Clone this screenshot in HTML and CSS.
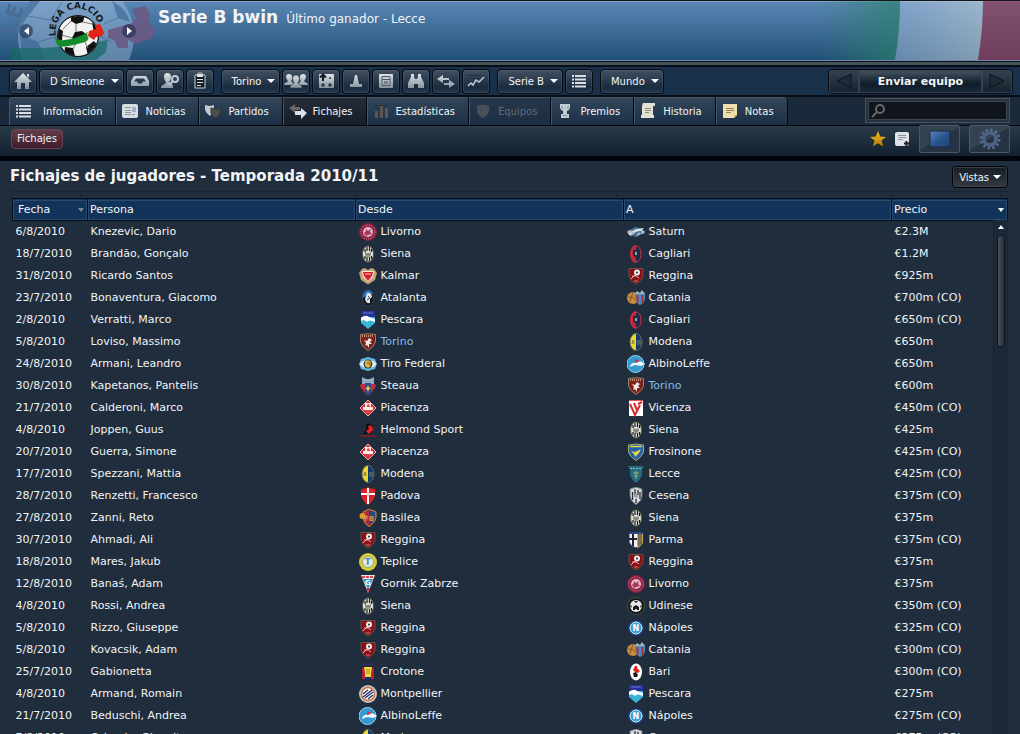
FILE: index.html
```html
<!DOCTYPE html>
<html lang="es">
<head>
    <meta charset="UTF-8">
    <meta name="viewport" content="width=device-width, initial-scale=1.0">
    <title>Serie B bwin - Fichajes</title>
    <link rel="stylesheet" href="styles.css">
</head>
<body>
    <!-- shared gradients -->
    <svg class="defs" aria-hidden="true">
        <defs>
            <linearGradient id="metal" gradientUnits="userSpaceOnUse" x1="0" y1="2" x2="0" y2="18">
                <stop offset="0" stop-color="#e4e8ec"/><stop offset="1" stop-color="#7f8d9a"/>
            </linearGradient>
            <linearGradient id="gold" x1="0" y1="0" x2="0" y2="1">
                <stop offset="0" stop-color="#f0c030"/><stop offset="1" stop-color="#b87803"/>
            </linearGradient>
            <linearGradient id="screen" x1="0" y1="0" x2="1" y2="1">
                <stop offset="0" stop-color="#5c86bb"/><stop offset=".5" stop-color="#2a5590"/><stop offset="1" stop-color="#1d4278"/>
            </linearGradient>
        </defs>
    </svg>

    <header class="banner">
        <svg class="banner-ghost" width="160" height="59" viewBox="0 1 160 59" aria-hidden="true">
            <defs><path id="ghostArc" d="M18 34Q18 16 28 0"/></defs>
            <circle cx="76" cy="36" r="58" fill="#a9c4e2" opacity=".45"/>
            <path d="M20 34L38 42L46 60H22ZM112 1Q126 8 130 22L118 18ZM18 30L28 16L40 1H30Q20 12 18 30Z" fill="#35608f" opacity=".6"/>
            <path d="M38 42L60 36M28 16L50 20L62 2M112 42L96 34M118 18L104 24" stroke="#35608f" opacity=".6" fill="none"/>
            <path d="M10 48Q60 50 108 40L106 52L96 60H12Z" fill="#196a68" opacity=".75"/>
            <path d="M108 30L132 23L136 18L132 9L146 6L150 14L148 22L156 30L152 38L136 44L128 40L128 48L118 48L114 40L108 38Z" fill="#6a5a84" opacity=".9"/>
            <text font-size="21" font-weight="bold" fill="#4a6c92"><textPath href="#ghostArc">LE</textPath></text>
        </svg>
        <svg class="banner-flag" width="200" height="59" viewBox="0 0 200 59" preserveAspectRatio="none" aria-hidden="true">
            <defs>
                <linearGradient id="flagGreen"><stop offset="0" stop-color="#2f8065" stop-opacity="0"/><stop offset="1" stop-color="#2c8069" stop-opacity=".7"/></linearGradient>
                <linearGradient id="flagWhite"><stop offset="0" stop-color="#a9bfe0" stop-opacity=".5"/><stop offset="1" stop-color="#cbd6dc" stop-opacity=".58"/></linearGradient>
            </defs>
            <path d="M0 0H80Q80 30 75 59H0Z" fill="url(#flagGreen)"/>
            <path d="M80 0H163Q163 30 158 59H75Q80 30 80 0Z" fill="url(#flagWhite)"/>
            <path d="M163 0H200V59H158Q163 30 163 0Z" fill="#963650" opacity=".68"/>
        </svg>
        <button class="round-btn" type="button" aria-label="Anterior"><svg width="5" height="8" viewBox="0 0 5 8"><path d="M5 0V8L0 4Z" fill="#fff"/></svg></button>
        <svg class="league-logo" width="76" height="58" viewBox="0 0 76 58" role="img" aria-label="Lega Calcio">
            <defs>
                <path id="logoArc" d="M18 34A22 23 0 0 1 60 21"/>
                <clipPath id="ballClip"><circle cx="40" cy="34" r="20"/></clipPath>
            </defs>
            <circle cx="40" cy="34" r="21" fill="#111"/>
            <g clip-path="url(#ballClip)">
                <circle cx="40" cy="34" r="20" fill="#f1f1f1"/>
                <path d="M33 12L47 12L45 20L38 22L33 19ZM37 30L44 29L49 33L47 40L38 41L34 36ZM19 25L25 29L24 38L18 40ZM54 20L61 26L60 35L56 31ZM27 45L35 46L37 54L26 55ZM48 45L56 39L60 44L50 54Z" fill="#111"/>
                <path d="M38 22V30M49 33L56 31M34 36L24 33M38 41L35 47M47 40L50 46M45 20L54 22M33 19L25 27" stroke="#777" fill="none"/>
            </g>
            <path d="M17 35Q20 39 26 38Q38 37 50 30L52 34L49 39Q36 44 22 45Q17 42 17 35Z" fill="#138a2c"/>
            <path d="M49 31L53 29L53 35L50 36Z" fill="#eee"/>
            <path d="M51 29L58 27L57 23L62 22L64 26L66 31L64 34L58 35L56 38L50 34Z" fill="#e32218"/>
            <text font-size="9" font-weight="bold" fill="#15191f"><textPath href="#logoArc">LEGA CALCIO</textPath></text>
        </svg>
        <button class="round-btn" type="button" aria-label="Siguiente"><svg width="5" height="8" viewBox="0 0 5 8"><path d="M0 0V8L5 4Z" fill="#fff"/></svg></button>
        <h1>Serie B bwin</h1>
        <p class="subtitle">Último ganador - Lecce</p>
    </header>

    <nav class="toolbar" aria-label="Principal">
        <div class="group">
            <button class="tool" type="button" aria-label="Inicio"><svg viewBox="0 0 20 20"><path d="M10 2L19 11H16V18H12V12H8V18H4V11H1ZM14 3H16V7L14 5Z" fill="url(#metal)"/></svg></button>
            <button class="tool menu" type="button">D Simeone<span class="caret"></span></button>
            <button class="tool" type="button" aria-label="Bandeja"><svg viewBox="0 0 20 20"><path d="M4 5H16L19 10V15H1V10ZM6 7.500L4 10.500H7L8 12.500H12L13 10.500H16L14 7.500Z" fill="url(#metal)" fill-rule="evenodd"/></svg></button>
            <button class="tool" type="button" aria-label="Ojeador"><svg viewBox="0 0 20 20"><path d="M7 2Q11 2 11 6Q11 9 9 11L13 14V17H1Q1 14 5 13L6 11Q4 9 4 6Q4 2 7 2Z" fill="url(#metal)"/><circle cx="15" cy="8" r="3" fill="none" stroke="#c0c8d0" stroke-width="2"/><path d="M13 10L9 14" stroke="#c0c8d0" stroke-width="2"/></svg></button>
            <button class="tool" type="button" aria-label="Tareas"><svg viewBox="0 0 20 20"><path d="M5 4H8V2H12V4H15V17H5Z" fill="#151c24" stroke="#c9d0d6" stroke-width="1"/><path d="M7 3H13V6H7Z" fill="#dde2e6"/><path d="M7 8.500H13M7 11.500H13M7 14.500H11" stroke="#dde2e6"/></svg></button>
        </div>
        <div class="group">
            <button class="tool menu" type="button">Torino<span class="caret"></span></button>
            <button class="tool" type="button" aria-label="Plantilla"><svg class="wide" viewBox="0 0 24 20"><path d="M5 3Q8 3 8 6Q8 9 7 10L9 12V14H0Q0 12 3 11L4 10Q2 8 2 6Q2 3 5 3ZM19 3Q22 3 22 6Q22 8 20 10L21 11Q24 12 24 14H15V12L17 10Q16 9 16 6Q16 3 19 3Z" fill="url(#metal)"/><path d="M12 4Q15.500 4 15.500 8Q15.500 10 14 12L15 13Q18 14 18 17H6Q6 14 9 13L10 12Q8.500 10 8.500 8Q8.500 4 12 4Z" fill="url(#metal)" stroke="#29394a" stroke-width=".6"/></svg></button>
            <button class="tool" type="button" aria-label="Tácticas"><svg viewBox="0 0 20 20"><rect x="3" y="3" width="15" height="14" rx="1" fill="url(#metal)"/><path d="M7 3V10M4 6.500L7 3.500L10 6.500" stroke="#111820" stroke-width="2" fill="none"/><circle cx="14" cy="7" r="1" fill="#253545"/><circle cx="7" cy="14" r="1.700" fill="#253545"/><circle cx="14" cy="14" r="1.700" fill="#253545"/></svg></button>
            <button class="tool" type="button" aria-label="Entrenamiento"><svg viewBox="0 0 20 20"><path d="M9 4H11L13 13H16V16H4V13H7Z" fill="url(#metal)"/></svg></button>
            <button class="tool" type="button" aria-label="Calendario"><svg viewBox="0 0 20 20"><rect x="3" y="3" width="14" height="14" rx="1" fill="url(#metal)"/><path d="M6 5.500H14V14.500H6ZM6 8.500H14" fill="none" stroke="#4a5864"/><rect x="8" y="10" width="4" height="3" fill="#75838f"/></svg></button>
            <button class="tool" type="button" aria-label="Ojear"><svg viewBox="0 0 20 20"><path d="M5 3H8V6L9 8H11L12 6V3H15V6L18 12V17H12V13H8V17H2V12L5 6Z" fill="url(#metal)"/></svg></button>
            <button class="tool" type="button" aria-label="Traspasos"><svg viewBox="0 0 20 20"><path d="M1 8L7 4V7H13V9H7V12ZM19 13L13 9V12H8V14H13V17Z" fill="url(#metal)"/></svg></button>
            <button class="tool" type="button" aria-label="Finanzas"><svg viewBox="0 0 20 20"><path d="M2 4.500H18M2 7.500H18M2 10.500H18" stroke="#223243"/><path d="M2 15L5 12L7 14L10 9L13 11L18 6" fill="none" stroke="#c0c8cf" stroke-width="1.500"/></svg></button>
        </div>
        <div class="group">
            <button class="tool menu" type="button">Serie B<span class="caret"></span></button>
            <button class="tool" type="button" aria-label="Lista"><svg viewBox="0 0 20 20"><path d="M3 5H5M6 5H17M3 8.500H5M6 8.500H17M3 12H5M6 12H17M3 15.500H5M6 15.500H17" stroke="#d9dee2" stroke-width="2"/></svg></button>
        </div>
        <div class="group">
            <button class="tool menu" type="button">Mundo<span class="caret"></span></button>
        </div>
        <div class="continue">
            <button type="button" aria-label="Atrás"><svg width="16" height="16" viewBox="0 0 16 16"><path d="M15 1V15L1 8Z" fill="#1e2a35" stroke="#0c141c"/></svg></button>
            <button class="send" type="button">Enviar equipo</button>
            <button type="button" aria-label="Adelante"><svg width="16" height="16" viewBox="0 0 16 16"><path d="M1 1V15L15 8Z" fill="#1e2a35" stroke="#0c141c"/></svg></button>
        </div>
    </nav>

    <nav class="tabs" aria-label="Secciones">
        <a class="tab first" href="#"><svg viewBox="0 0 16 16"><path d="M1 3H3M4 3H16M1 6.500H3M4 6.500H16M1 10H3M4 10H16M1 13.500H3M4 13.500H16" stroke="#d9dee2" stroke-width="2"/></svg>Información</a>
        <a class="tab" href="#"><svg viewBox="0 0 16 16"><rect x="0" y="1" width="16" height="14" rx="2" fill="#d8dde0"/><path d="M3 4.500H9M3 7.500H9M3 9.500H9M3 11.500H9M10 11.500H13" stroke="#8b979f"/><rect x="10" y="4" width="4" height="5" fill="#9db2c4"/></svg>Noticias</a>
        <a class="tab" href="#"><svg viewBox="0 0 16 16"><path d="M0 2L5 3L9 2V8L5 13Q1 10 0 7Z" fill="#c3c9cd"/><path d="M6 5L10.500 6L15 5V10Q14 13 10.500 15Q7 13 6 10Z" fill="#4f4e4d" stroke="#3a3a3b"/></svg>Partidos</a>
        <a class="tab active" href="#"><svg class="big" viewBox="0 0 18 16"><path d="M0 5L6 1V4H11V7H6V10Z" fill="#6b6663"/><path d="M18 10L12 5V8H6V12H12V16Z" fill="#dce1e5"/></svg>Fichajes</a>
        <a class="tab" href="#"><svg viewBox="0 0 16 16"><path d="M1 2.500H15M1 5.500H15" stroke="#25323f"/><path d="M2 8H5V15H2ZM7 3H10V15H7ZM12 5H15V15H12Z" fill="#5b5655"/></svg>Estadísticas</a>
        <a class="tab disabled" href="#"><svg viewBox="0 0 16 16"><path d="M2 3Q8 0 14 3V8Q13 13 8 15Q3 13 2 8Z" fill="#484f56"/></svg>Equipos</a>
        <a class="tab" href="#"><svg viewBox="0 0 16 16"><path d="M3 1H13V5Q12 8 10 8V11H12V15H4V11H6V8Q4 8 3 5Z" fill="#c2cbd2"/><path d="M5 3V6M11 3V6M6 12.500H10" stroke="#7c8992"/></svg>Premios</a>
        <a class="tab" href="#"><svg viewBox="0 0 16 16"><path d="M3 0H15V3H13V12H14V15H1V12H2V3Z" fill="#e2dfd3"/><path d="M5 5.500H11M5 7.500H11M5 9.500H9" stroke="#8c8a82"/></svg>Historia</a>
        <a class="tab" href="#"><svg viewBox="0 0 16 16"><path d="M1 1H15V12L12 15H1Z" fill="#f0dfaa"/><path d="M4 5.500H12M4 7.500H12M4 9.500H9" stroke="#8e8463"/><path d="M15 12L12 15V12Z" fill="#c9b57a"/></svg>Notas</a>
        <form class="search">
            <svg width="14" height="14" viewBox="0 0 14 14" aria-hidden="true"><circle cx="9" cy="5" r="4" fill="none" stroke="#66696d" stroke-width="2"/><path d="M6 8L1 13" stroke="#66696d" stroke-width="2"/></svg>
            <input type="search" aria-label="Buscar">
        </form>
    </nav>

    <div class="subbar">
        <a class="pill" href="#">Fichajes</a>
        <div class="actions">
            <button class="plain" type="button" aria-label="Favorito"><svg width="18" height="18" viewBox="0 0 18 18"><path d="M9 1L11.200 6.600L17 7L12.500 10.600L14.200 16.500L9 13.200L3.800 16.500L5.500 10.600L1 7L6.800 6.600Z" fill="url(#gold)"/></svg></button>
            <button class="plain" type="button" aria-label="Añadir nota"><svg width="16" height="16" viewBox="0 0 16 16"><rect x="1" y="1" width="14" height="14" rx="2" fill="#dfe3e7"/><path d="M4 4.500H12M4 6.500H12M4 8.500H9" stroke="#8d949b"/><path d="M12.500 10V15.500M10 12.500H15.500" stroke="#20262c" stroke-width="2"/></svg></button>
            <button class="square" type="button" aria-label="Pantalla"><svg width="22" height="18" viewBox="0 0 22 18"><rect x="1" y="1" width="20" height="16" fill="url(#screen)" stroke="#1a2d48"/></svg></button>
            <button class="square" type="button" aria-label="Opciones"><svg width="22" height="22" viewBox="0 0 22 22"><circle cx="11" cy="11" r="9" fill="none" stroke="#566c8c" stroke-width="3" stroke-dasharray="2.356 2.356"/><circle cx="11" cy="11" r="6" fill="none" stroke="#4b6283" stroke-width="4"/><circle cx="11" cy="11" r="4" fill="none" stroke="#2f415c"/></svg></button>
        </div>
    </div>

    <main>
        <div class="heading">
            <h2>Fichajes de jugadores - Temporada 2010/11</h2>
            <button class="views" type="button">Vistas<span class="caret"></span></button>
        </div>
        <div class="list">
            <table>
                <colgroup><col class="col-date"><col><col><col><col class="col-price"></colgroup>
                <thead>
                    <tr>
                        <th scope="col"><div class="head">Fecha<span class="sort dim"></span></div></th>
                        <th scope="col"><div class="head">Persona</div></th>
                        <th scope="col"><div class="head">Desde</div></th>
                        <th scope="col"><div class="head">A</div></th>
                        <th scope="col"><div class="head">Precio<span class="sort"></span></div></th>
                    </tr>
                </thead>
                <tbody id="transfers"></tbody>
            </table>
            <div class="scrollbar" aria-hidden="true"><span class="up"></span><span class="thumb"></span></div>
        </div>
    </main>

    <script src="script.js"></script>
</body>
</html>
```
FILE: styles.css
```css
* {
    box-sizing: border-box;
}

body {
    margin: 0;
    height: 100vh;
    display: flex;
    flex-direction: column;
    overflow: hidden;
    background-color: #1f2d3d;
    color: #f2f4f6;
    font-family: "DejaVu Sans", Verdana, sans-serif;
    font-size: 11px;
}

button {
    font-family: inherit;
    color: inherit;
    padding: 0;
    cursor: pointer;
}

a {
    color: inherit;
    text-decoration: none;
}

svg {
    display: block;
    flex: none;
}

.defs {
    position: absolute;
    width: 0;
    height: 0;
}

/* banner */
.banner {
    position: relative;
    flex: none;
    display: flex;
    align-items: center;
    height: 61px;
    padding-left: 19px;
    border-top: 1px solid #10151c;
    border-bottom: 1px solid #6c87a3;
    background: linear-gradient(#5a88b6, #215078);
    box-shadow: inset 0 1px #8ba2c0;
    overflow: hidden;
}

.banner > * {
    position: relative;
}

.banner .banner-ghost {
    position: absolute;
    left: 0;
    top: 0;
}

.banner .banner-flag {
    position: absolute;
    right: 0;
    top: 0;
}

.round-btn {
    width: 14px;
    height: 14px;
    display: flex;
    align-items: center;
    justify-content: center;
    border: none;
    border-radius: 50%;
    background-color: rgba(25, 45, 75, 0.6);
}

.league-logo {
    margin: 0 8px 0 5px;
}

.banner h1 {
    margin: 0;
    padding: 0 8px 27px 22px;
    font-size: 17px;
    line-height: 20px;
}

.subtitle {
    margin: 0;
    padding-bottom: 24px;
    font-size: 12px;
    line-height: 16px;
}

/* toolbar */
.toolbar {
    flex: none;
    display: flex;
    align-items: center;
    height: 36px;
    padding: 5px 7px 0 9px;
    border-top: 1px solid #0c1118;
    border-bottom: 2px solid #080d14;
    background: linear-gradient(#45545a 0, #45545a 3px, #0a0f15 3px, #0a0f15 5px, #19304a 5px);
}

.group {
    display: flex;
    gap: 2px;
    margin-right: 7px;
}

.tool {
    display: flex;
    align-items: center;
    justify-content: center;
    width: 28px;
    height: 25px;
    border: 1px solid #070b11;
    border-radius: 4px;
    background: linear-gradient(#425061, #1b2c3f 75%, #24384d);
    box-shadow: inset 0 0 0 1px rgba(110, 130, 150, 0.25);
    font-size: 10px;
}

.tool svg {
    width: 20px;
    height: 20px;
}

.tool .wide {
    width: 24px;
}

.menu {
    width: auto;
    gap: 6px;
    padding: 0 4px 0 10px;
}

.caret {
    border: 4px solid transparent;
    border-top-color: #fff;
    border-bottom: none;
}

.continue {
    display: flex;
    margin-left: auto;
    height: 25px;
    border: 1px solid #070b11;
    border-radius: 4px;
    overflow: hidden;
}

.continue button {
    display: flex;
    align-items: center;
    justify-content: center;
    width: 30px;
    border: 1px solid #35434f;
    background: linear-gradient(#34424f, #14212e);
}

.continue .send {
    width: 123px;
    background: linear-gradient(#44525f, #101d2a 60%, #16283a);
    font-size: 11px;
    font-weight: bold;
}

/* tabs */
.tabs {
    flex: none;
    display: flex;
    height: 29px;
    padding: 0 10px 0 9px;
    border-bottom: 1px solid #05080c;
    background-color: #1b2a3a;
}

.tab {
    display: flex;
    align-items: center;
    gap: 7px;
    padding: 0 13px 0 6px;
    border-right: 1px solid #05080c;
    background: linear-gradient(#33465a, #1b3047);
    box-shadow: inset 1px 1px #43566a;
    font-size: 10px;
    white-space: nowrap;
}

.tab svg {
    width: 16px;
    height: 16px;
}

.tab .big {
    width: 18px;
    margin-right: -1px;
}

.tab.first {
    gap: 12px;
    border-top-left-radius: 4px;
}

.tab:last-of-type {
    border-top-right-radius: 4px;
}

.tab.active {
    background: linear-gradient(#242d38, #151e29);
}

.tab.disabled {
    color: #5f6a75;
    background: linear-gradient(#26384b, #1b2e43);
}

.search {
    display: flex;
    align-items: center;
    width: 145px;
    height: 25px;
    margin: 1px 0 0 auto;
    padding: 0 3px;
    border: 3px solid #27323d;
    outline: 1px solid #46525d;
    outline-offset: -1px;
    background-color: #0f141d;
    box-shadow: inset 0 0 0 1px #3b464f;
}

.search input {
    flex: 1;
    min-width: 0;
    border: none;
    outline: none;
    background: none;
    color: #fff;
    font-family: inherit;
    font-size: 11px;
}

/* sub bar */
.subbar {
    flex: none;
    display: flex;
    align-items: center;
    height: 35px;
    padding: 0 10px 6px 11px;
    border-bottom: 4px solid #02050a;
    background: linear-gradient(#2b3a49, #12212f 30px, #02050a 30px);
}

.pill {
    height: 20px;
    padding: 0 5px;
    border: 1px solid #6d4351;
    border-radius: 4px;
    background: linear-gradient(#623d4c, #421c2a);
    font-size: 10px;
    line-height: 18px;
}

.actions {
    display: flex;
    align-items: center;
    gap: 9px;
    margin-left: auto;
}

.plain {
    border: none;
    background: none;
}

.plain + .plain {
    margin-left: -2px;
}

.square {
    display: flex;
    align-items: center;
    justify-content: center;
    width: 41px;
    height: 28px;
    border: 1px solid #4c5965;
    border-radius: 2px;
    background: linear-gradient(150deg, #354351 48%, #253342 50%);
}

/* transfers */
main {
    flex: 1;
    min-height: 0;
    display: flex;
    flex-direction: column;
    padding: 0 12px;
}

.heading {
    flex: none;
    display: flex;
    align-items: center;
    justify-content: space-between;
    height: 31px;
    margin: 0 0 6px -2px;
    border-bottom: 1px solid #1a2531;
}

.heading h2 {
    margin: 0;
    font-size: 15px;
    line-height: 20px;
}

.views {
    display: flex;
    align-items: center;
    gap: 4px;
    height: 22px;
    margin-top: 2px;
    padding: 0 6px;
    border: 1px solid #000;
    border-radius: 4px;
    background: linear-gradient(#161d25, #333a42);
    box-shadow: inset 0 0 0 1px #39414a;
    font-size: 10px;
}

.list {
    position: relative;
    flex: 1;
    min-height: 0;
    overflow: hidden;
}

table {
    width: 100%;
    table-layout: fixed;
    border-collapse: collapse;
}

.col-date {
    width: 75px;
}

.col-price {
    width: 116px;
}

th,
td {
    height: 22px;
    padding: 0 3px;
    text-align: left;
    font-weight: normal;
    line-height: 16px;
    white-space: nowrap;
}

th {
    padding: 0;
    border: 1px solid #070d14;
    background-color: #12345a;
}

.head {
    display: flex;
    align-items: center;
    justify-content: space-between;
    height: 20px;
    padding: 0 3px 0 2px;
    box-shadow: inset 0 0 0 1px #2c4b6c;
}

th:first-child .head {
    padding-left: 5px;
}

.sort {
    border: 3px solid transparent;
    border-top: 4px solid #fff;
    border-bottom: none;
}

.sort.dim {
    border-top-color: #7388a0;
}

.club {
    display: flex;
    align-items: center;
    gap: 4px;
}

.club svg {
    width: 18px;
    height: 18px;
}

.club .own {
    color: #85bdec;
}

.scrollbar {
    position: absolute;
    top: 22px;
    right: 0;
    bottom: 0;
    width: 15px;
    display: flex;
    flex-direction: column;
    align-items: center;
    gap: 6px;
    padding-top: 5px;
    border-left: 1px solid #15202c;
    background-color: #1b2836;
}

.up {
    border: 3px solid transparent;
    border-top: none;
    border-bottom: 4px solid #fff;
}

.thumb {
    width: 8px;
    height: 112px;
    border: 1px solid #0e141c;
    border-radius: 3px;
    background: linear-gradient(90deg, #474d59, #2b303c);
}
```
FILE: script.js
```js
const SHIELD = 'M2 1.500H16V9Q15 14 9 17Q3 14 2 9Z';

// club crests, drawn in an 18x18 box
const crests = {
    'Livorno': '<circle cx="9" cy="9" r="9" fill="#8e1e42"/><circle cx="9" cy="9" r="7" fill="none" stroke="#c58799" stroke-dasharray="1 1"/><circle cx="9" cy="9" r="5" fill="#dfbcc6"/><path d="M5 10L7 8V6L9 8L12 6L11 9L13 11L9 12L7 13Z" fill="#a8385a"/>',
    'Siena': '<ellipse cx="9" cy="9" rx="5.500" ry="8" fill="#e4e4de" stroke="#5d5a3c"/><path d="M6 4V7M6 11V14M8 2V6M10.500 2V6M8 12V16M10.500 12V16M12.500 4V7M12.500 11V14" stroke="#16181b" stroke-width="1.200"/><path d="M6 7L9 8L12 7V10L10 12H8L6 10Z" fill="#8b8a84"/>',
    'Kalmar': '<path d="M0 6L3 2L6 1L9 3L12 1L15 2L18 6L16 13L9 17.500L2 13Z" fill="#c5a273"/><path d="M3 4H15L14 10L9 15L4 10Z" fill="#f4e9e0"/><path d="M4 5H14L13 9L9 14L5 9Z" fill="#d4202a"/><path d="M6 7H12" stroke="#f3c3c0"/>',
    'Atalanta': '<ellipse cx="9" cy="9" rx="5.500" ry="8" fill="#101217" stroke="#39424e"/><path d="M9 1Q3.500 2 3.500 9L8 7L14 5Q12 1 9 1Z" fill="#2273bd"/><path d="M8 4Q12 3 13 8L11 10V14Q7 15 6 10Z" fill="#dde6ee"/><path d="M9 7L11 9L8 11" stroke="#39424c" fill="none"/>',
    'Pescara': '<path d="M2 0H16V12L9 18L2 12Z" fill="#37b6d8"/><path d="M2 0H16V6H2Z" fill="#25309a"/><path d="M2 7Q7 3 10 6L16 8V11Q10 8 8 11L5 9L2 10Z" fill="#fff"/><path d="M4 2H14" stroke="#6c7ccc"/>',
    'Torino': '<path d="M1.500 1.500Q9 0 16.500 1.500V9Q15 14 9 17.500Q3 14 1.500 9Z" fill="#7c2019" stroke="#b89470" stroke-width=".8"/><path d="M3 3H15" stroke="#d1b6a0" stroke-width="1.500" stroke-dasharray="1 1"/><path d="M5 7L8 8L10 5L13 7L11 9L13 11L10 11L10 15L8 12L6 13L7 10Z" fill="#f0e8e2"/>',
    'Tiro Federal': '<path d="M2 4L9 2L16 4L18 9L16 14L9 16L2 14L0 9Z" fill="#65b3df"/><ellipse cx="9" cy="9" rx="8" ry="4" fill="#edf0e9"/><circle cx="9" cy="9" r="4.500" fill="#29415c"/><path d="M6 6L9 5L12 7L12 11L9 13L6 11Z" fill="#e2b53a"/><path d="M8 8H11V11" stroke="#7b4c1d" fill="none"/>',
    'Steaua': '<path d="M3 4L3 0L7 2H11L15 0L15 4L15 7H3Z" fill="#92adc2"/><path d="M2 7L1 9L3 12Q5 16 9 18Q13 16 15 12L17 9L16 7Z" fill="#c82a39"/><path d="M6 6H12V16L9 18L6 16Z" fill="#274a91"/><path d="M9 8L10 10.500L12 11L10 12.500L9 15L8 12.500L6 11L8 10.500Z" fill="#eccb43"/>',
    'Piacenza': '<path d="M9 1L17 9L9 17L1 9Z" fill="#d9252b" stroke="#efb1ad"/><path d="M6 4H12V8H14V11H4V8H6Z" fill="#fbeceb"/><path d="M8 6L10 5L11 8H8ZM5 11H13L9 15Z" fill="#dd4648"/>',
    'Helmond Sport': '<path d="M4 13L7 8V4L10 2L14 5L13 11L11 13Z" fill="#101115"/><path d="M9 5Q14 3 14 9L10 13L7 10L10 8Z" fill="#ed1e27"/><path d="M1 15H17" stroke="#8d1b23" stroke-width="1.500"/>',
    'Modena': '<ellipse cx="9" cy="9" rx="6" ry="8.500" fill="#14396f"/><path d="M9 .500A6 8.500 0 0 0 9 17.500Z" fill="#efd62d"/><ellipse cx="9" cy="9" rx="6" ry="8.500" fill="none" stroke="#626f54"/><path d="M5 11L6 7L7 11M11 7V12M13 7V12" stroke="#7e8148" fill="none"/>',
    'Padova': '<path d="M2 2Q6 2 9 0Q12 2 16 2V8Q15 14 9 18Q3 14 2 8Z" fill="#dd2028"/><path d="M9 1V17M2 7H16" stroke="#fff" stroke-width="2"/><path d="M9 5V10" stroke="#e8a29c"/>',
    'Basilea': '<path d="M4 3L10 0L17 3V8Q16 14 10 17.500Q5 15 4 9Z" fill="#b72737" stroke="#bb9143"/><path d="M10 1L16 3.500V8Q15 13 10 16Z" fill="#254889"/><circle cx="3.500" cy="7" r="3" fill="#dc9d2a"/><text x="5" y="12" font-size="7" font-weight="bold" fill="#c99c48">FB</text>',
    'Reggina': `<path d="${SHIELD}" fill="#8f0d17" stroke="#675247"/><circle cx="10" cy="5.500" r="3" fill="#eee"/><circle cx="10" cy="5.500" r="1" fill="#222"/><path d="M4 12L8 8L12 11M5 9L9 9" stroke="#e1b6b4" fill="none"/><path d="M7 14H11" stroke="#cc7f7d"/>`,
    'Teplice': '<circle cx="9" cy="9" r="9" fill="#d4cd35"/><circle cx="9" cy="9" r="5.500" fill="#e2e8ec" stroke="#9aa873"/><text x="6" y="12" font-size="8" font-weight="bold" fill="#5682aa">T</text>',
    'Gornik Zabrze': '<path d="M2 0H16L9 18Z" fill="#dee8ee"/><path d="M3 2H15" stroke="#d64a54" stroke-width="2" stroke-dasharray="3 1"/><path d="M4 4H14L9 14Z" fill="#2e93bd"/><path d="M7 13L9 18L11 13Z" fill="#cc3340"/><text x="6" y="10" font-size="7" font-weight="bold" fill="#fff">G</text>',
    'Crotone': '<path d="M4 4H14V17H4Z" fill="#23296a"/><path d="M3 1.500H15" stroke="#422b6a" stroke-width="2" stroke-dasharray="2 1"/><path d="M3 5H6V16H3ZM12 5H15V16H12Z" fill="#bc2139"/><path d="M5 4H13L12 10L12 14H6L6 10Z" fill="#efdb38"/><path d="M8 6V11M10 6V11" stroke="#a5912e"/>',
    'Montpellier': '<circle cx="9" cy="9" r="9" fill="#c2c7cb"/><circle cx="9" cy="9" r="6.500" fill="#fff" stroke="#d87443" stroke-width="1.500"/><path d="M4 9L9 5M4 12L13 5M6 13L14 7M9 14L14 10" stroke="#25386d" stroke-width="1.500"/>',
    'AlbinoLeffe': '<circle cx="8.500" cy="9" r="8.500" fill="#329bd0" stroke="#9ed1e8"/><path d="M3 12Q4 7 9 8L13 6L18 9L14 11L8 10Z" fill="#eef8fc"/><path d="M8 4L13 6L8 8Z" fill="#dd3149"/>',
    'Saturn': '<ellipse cx="9" cy="9" rx="9" ry="3" fill="#a5b4c0"/><circle cx="9" cy="9" r="5" fill="#416b90"/><path d="M1 11Q7 5 17 5L14 8Q8 8 4 13Z" fill="#dbe3e7"/><path d="M4 11L8 9M10 12L13 10" stroke="#b2bdc8" stroke-width="2"/>',
    'Cagliari': '<ellipse cx="9" cy="9" rx="6" ry="9" fill="#c42638"/><path d="M9 0A6 9 0 0 1 9 18Z" fill="#1b2744"/><ellipse cx="9" cy="9" rx="5" ry="8" fill="none" stroke="#c9334b"/><path d="M6 5H12V10L9 13L6 10Z" fill="#202c49"/><path d="M8 7H10V10H8Z" fill="#9aa1ae"/>',
    'Catania': '<circle cx="6" cy="9" r="6" fill="#c98c3c"/><path d="M1 8Q6 7 10 12M3 13L6 3" stroke="#8c5823" fill="none"/><path d="M8 4H18V10Q17 14 13 16Q9 14 8 10Z" fill="#3f91c5"/><path d="M10.500 6V14M15.500 6V14" stroke="#b53035" stroke-width="2"/><path d="M8 5L10 2L13 4L15 1L18 5Z" fill="#a7b3bd"/>',
    'Vicenza': '<rect x="2" y="1" width="14" height="16" fill="#fff"/><path d="M3 5L8 16L13 6M7 4L10 11M11 5L15 3" fill="none" stroke="#d52b31" stroke-width="2"/><path d="M2 1.500H16" stroke="#e3534f"/>',
    'Frosinone': '<path d="M1.500 2Q9 0 16.500 2V9Q15 14 9 17.500Q3 14 1.500 9Z" fill="#2460ad" stroke="#a9ad68"/><path d="M3 3.500H15" stroke="#e5d54c" stroke-width="1.500"/><path d="M4 8L8 9L14 6L12 10L8 14L7 11Z" fill="#e6d84e"/>',
    'Lecce': '<path d="M1 1H17L15 5V10Q14 14 9 18Q4 14 3 10V5Z" fill="#236c82"/><path d="M3 3.500H15" stroke="#95b8bd" stroke-dasharray="2 1"/><path d="M9 6V14M6 8H12M7 11H11" stroke="#a8b26a"/>',
    'Cesena': '<path d="M3 2L9 0L15 2V9Q15 14 9 17.500Q3 14 3 9Z" fill="#d7dadb" stroke="#70777d"/><path d="M5.500 5V13M8 2V8M11 3V8M13 5V12M9 12V16" stroke="#292e33" stroke-width="1.300"/><circle cx="9" cy="9" r="2" fill="#9ba1a4"/>',
    'Parma': '<path d="M2 1.500H16V11Q15 15 9 17Q3 15 2 11Z" fill="#f3f2ea" stroke="#273564"/><path d="M10 2H16V11Q15 15 10 17Z" fill="#d1a64b"/><path d="M12 3V15M14 3V14" stroke="#273564"/><path d="M6 3V15M2 8H10" stroke="#172036" stroke-width="2"/><path d="M2 2H16" stroke="#31438a" stroke-width="2"/>',
    'Udinese': '<circle cx="9" cy="9" r="8.500" fill="#181b1d" stroke="#6b6951" stroke-dasharray="1.500 1"/><circle cx="9" cy="9" r="6" fill="#e8e8e4"/><path d="M6 10L9 8L12 10V13H10V12H8V13H6ZM7 4H11L9 6ZM3 8L5 9L4 11ZM15 8L13 9L14 11Z" fill="#15181a"/>',
    'Nápoles': '<circle cx="9" cy="9" r="8" fill="#163e74"/><circle cx="9" cy="9" r="6" fill="#3f9fd4" stroke="#e2eff5"/><text x="5.500" y="12" font-size="8" font-weight="bold" fill="#fff">N</text>',
    'Bari': '<ellipse cx="9" cy="9" rx="6" ry="8.500" fill="#fff"/><path d="M8 3Q11 2 10 5L13 8L11 10L8 9L6 7Z" fill="#dc2521"/><path d="M6 10L9 9L11 12L10 14H7Z" fill="#17191b"/>'
};

const transfers = [
    ['6/8/2010', 'Knezevic, Dario', 'Livorno', 'Saturn', '€2.3M'],
    ['18/7/2010', 'Brandão, Gonçalo', 'Siena', 'Cagliari', '€1.2M'],
    ['31/8/2010', 'Ricardo Santos', 'Kalmar', 'Reggina', '€925m'],
    ['23/7/2010', 'Bonaventura, Giacomo', 'Atalanta', 'Catania', '€700m (CO)'],
    ['2/8/2010', 'Verratti, Marco', 'Pescara', 'Cagliari', '€650m (CO)'],
    ['5/8/2010', 'Loviso, Massimo', 'Torino', 'Modena', '€650m'],
    ['24/8/2010', 'Armani, Leandro', 'Tiro Federal', 'AlbinoLeffe', '€650m'],
    ['30/8/2010', 'Kapetanos, Pantelis', 'Steaua', 'Torino', '€600m'],
    ['21/7/2010', 'Calderoni, Marco', 'Piacenza', 'Vicenza', '€450m (CO)'],
    ['4/8/2010', 'Joppen, Guus', 'Helmond Sport', 'Siena', '€425m'],
    ['20/7/2010', 'Guerra, Simone', 'Piacenza', 'Frosinone', '€425m (CO)'],
    ['17/7/2010', 'Spezzani, Mattia', 'Modena', 'Lecce', '€425m (CO)'],
    ['28/7/2010', 'Renzetti, Francesco', 'Padova', 'Cesena', '€375m (CO)'],
    ['27/8/2010', 'Zanni, Reto', 'Basilea', 'Siena', '€375m'],
    ['30/7/2010', 'Ahmadi, Ali', 'Reggina', 'Parma', '€375m (CO)'],
    ['18/8/2010', 'Mares, Jakub', 'Teplice', 'Reggina', '€375m'],
    ['12/8/2010', 'Banaś, Adam', 'Gornik Zabrze', 'Livorno', '€375m'],
    ['4/8/2010', 'Rossi, Andrea', 'Siena', 'Udinese', '€350m (CO)'],
    ['5/8/2010', 'Rizzo, Giuseppe', 'Reggina', 'Nápoles', '€325m (CO)'],
    ['5/8/2010', 'Kovacsik, Adam', 'Reggina', 'Catania', '€300m (CO)'],
    ['25/7/2010', 'Gabionetta', 'Crotone', 'Bari', '€300m (CO)'],
    ['4/8/2010', 'Armand, Romain', 'Montpellier', 'Pescara', '€275m'],
    ['21/7/2010', 'Beduschi, Andrea', 'AlbinoLeffe', 'Nápoles', '€275m (CO)'],
    ['7/8/2010', 'Orlando, Gianvito', 'Modena', 'Cesena', '€275m (CO)']
];

function clubCell(name) {
    const cls = name === 'Torino' ? ' class="own"' : '';
    return `<td><div class="club"><svg viewBox="0 0 18 18" aria-hidden="true">${crests[name]}</svg><span${cls}>${name}</span></div></td>`;
}

document.getElementById('transfers').innerHTML = transfers.map(([date, person, from, to, price]) =>
    `<tr><td>${date}</td><td>${person}</td>${clubCell(from)}${clubCell(to)}<td>${price}</td></tr>`
).join('');
```
